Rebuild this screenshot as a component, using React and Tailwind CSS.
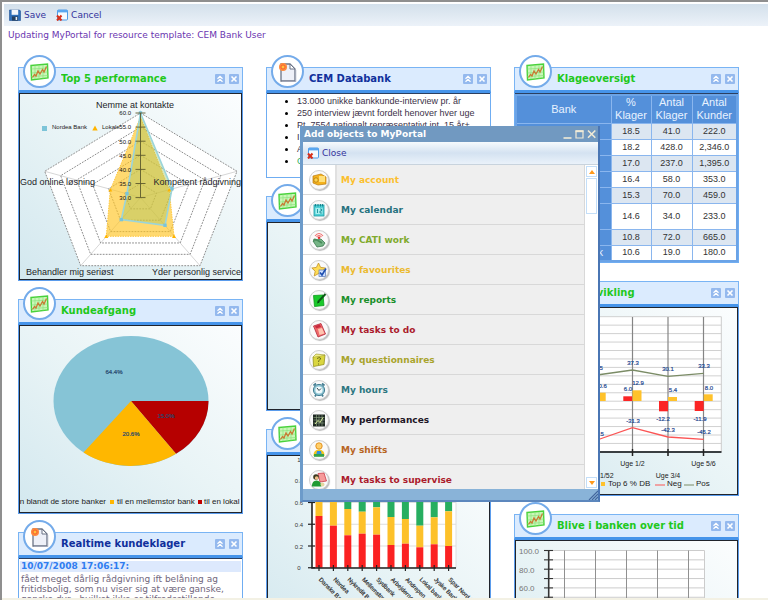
import React from "react";

const SANS = "font-['DejaVu_Sans',Verdana,sans-serif]";
const ARIAL = "font-['Liberation_Sans',Arial,sans-serif]";

function ChartGlyph() {
  return (
    <svg viewBox="0 0 19 18" className="h-[18px] w-[19px]">
      <path d="M1 2.5 L17.5 1 L18 15 L1.5 17 Z" fill="#c9f7b8" stroke="#49d23c" strokeWidth="1.4" />
      <path d="M5 2.5V16M9 2V16M13 2V15.5M1.5 6L17.5 5M1.5 10L17.5 9M1.5 13.5L17.5 12.5" stroke="#8be47c" strokeWidth="0.7" />
      <path d="M2.5 14.5 L4.5 11.5 L6 13 L8 8 L10 11 L12.5 6.5 L14 9 L16.5 3.5" fill="none" stroke="#c87b34" strokeWidth="1.3" />
    </svg>
  );
}

function PageGlyph() {
  return (
    <svg viewBox="0 0 19 20" className="h-[20px] w-[19px]">
      <path d="M3 2 H12 L17 7 V19 H3 Z" fill="#eef0f8" stroke="#6b7385" strokeWidth="1.3" />
      <path d="M12 2 V7 H17 Z" fill="#fff" stroke="#6b7385" strokeWidth="1" />
      <path d="M17.8 8 V19.7 H4" stroke="#a9aec0" fill="none" strokeWidth="0.8" />
      <circle cx="5" cy="5" r="4" fill="#ff8a3c" />
      <circle cx="5" cy="5" r="2" fill="#ffc23c" stroke="#f4502e" strokeWidth="0.8" />
    </svg>
  );
}

function WindowCloseGlyph() {
  return (
    <svg viewBox="0 0 12 12" className="h-[12px] w-[12px]">
      <rect x="1.5" y="1" width="10" height="10" rx="1" fill="#f4faff" stroke="#4d9be6" />
      <rect x="1.5" y="1" width="10" height="2.4" fill="#5aa7f0" />
      <path d="M1 6.5 L5.5 11.5 M5.5 6.5 L1 11.5" stroke="#d9301a" strokeWidth="2" />
    </svg>
  );
}

function SaveGlyph() {
  return (
    <svg viewBox="0 0 12 12" className="h-[12px] w-[12px]">
      <path d="M0.5 1 H10.5 L11.5 2 V11.5 H0.5 Z" fill="#2f6fb8" stroke="#1d4f94" strokeWidth="0.6" />
      <rect x="2.6" y="0.8" width="6.6" height="5" fill="#f3f7fb" />
      <rect x="3" y="7.4" width="6" height="4.2" fill="#24405f" />
      <rect x="6.6" y="8" width="1.6" height="3" fill="#e7eef6" />
    </svg>
  );
}

function Panel({ title, doc, plain, children }) {
  return (
    <article className="relative">
      <header className="flex h-[26px] items-center border-x border-t border-b-[3px] border-x-[#79b4f4] border-t-[#79b4f4] border-b-[#4694ea] bg-[#dbebfe] pr-[3px] pl-[42px]">
        <h2 className={`flex-1 truncate text-[10px] leading-[14px] font-bold ${doc ? "text-[#10309c]" : "text-[#1fc81c]"}`}>{title}</h2>
        <div className="flex gap-1">
          <button type="button" aria-label={`Collapse ${title}`} className="h-[10px] w-[10px] rounded-[1px] bg-[#94b9ee]">
            <svg viewBox="0 0 10 10" className="h-full w-full">
              <path d="M2.5 4.8 L5 2.4 L7.5 4.8 M2.5 7.8 L5 5.4 L7.5 7.8" fill="none" stroke="#fff" strokeWidth="1.3" />
            </svg>
          </button>
          <button type="button" aria-label={`Close ${title}`} className="h-[10px] w-[10px] rounded-[1px] bg-[#94b9ee]">
            <svg viewBox="0 0 10 10" className="h-full w-full">
              <path d="M2.5 2.5 L7.5 7.5 M7.5 2.5 L2.5 7.5" stroke="#fff" strokeWidth="1.6" />
            </svg>
          </button>
        </div>
      </header>
      <div className="absolute -top-3 left-[5px] flex h-[33px] w-[33px] items-center justify-center rounded-full border-2 border-[#74abea] bg-white">
        {doc ? <PageGlyph /> : <ChartGlyph />}
      </div>
      {plain ? (
        <div className="border-x border-b border-[#6fadf2] bg-white">
          <div className="border-t border-[#2b3f60]">{children}</div>
        </div>
      ) : (
        <div className="border-x border-b border-[#5b9cec]">
          <div className="overflow-hidden border border-[#20242c] bg-linear-to-tr from-[#d3e8ef] via-[#e9f4f6] to-[#fbfdfe]">{children}</div>
        </div>
      )}
    </article>
  );
}

const CX = 140.5;
const CY = 197.5;
const CORNERS = [[140.5, 113], [237, 171.3], [200, 265.7], [80.7, 265.7], [44.7, 171.3]];
const ring = (f) => CORNERS.map(([x, y]) => `${CX + (x - CX) * f},${CY + (y - CY) * f}`).join(" ");

function RadarChart() {
  const scale = ["60.0", "55.0", "50.0", "45.0", "40.0", "35.0", "30.0"];
  const bank = [[140.5, 113], [172, 188.7], [165, 225.3], [121.3, 219.6], [127, 193.7]];
  const local = [[140.5, 117], [169.3, 190], [174, 236.3], [106.3, 236.3], [110.3, 190]];
  return (
    <svg viewBox="20 94 221 185" className={`block w-full ${ARIAL}`}>
      <polygon points={ring(1)} fill="#fff" />
      {CORNERS.map(([x, y]) => <line key={x} x1={CX} y1={CY} x2={x} y2={y} stroke="#ccc" strokeWidth="0.8" />)}
      {[1, 5 / 6, 4 / 6, 3 / 6, 2 / 6, 1 / 6].map((f) => (
        <polygon key={f} points={ring(f)} fill="none" stroke="#8d8d8d" strokeWidth="1" strokeDasharray="1.8 1.2" />
      ))}
      <polygon points={local.join(" ")} fill="#ffc423" fillOpacity="0.65" stroke="#ffc940" strokeWidth="1" strokeDasharray="1.5 1" />
      <polygon points={bank.join(" ")} fill="#9fc25c" fillOpacity="0.4" stroke="#9bd5da" strokeWidth="1.6" />
      {bank.map(([x, y]) => <rect key={x} x={x - 1.7} y={y - 1.7} width="3.4" height="3.4" fill="#7cc4d8" />)}
      {local.slice(1).map(([x, y]) => <path key={x} d={`M${x} ${y - 2} l2 3.6 h-4 z`} fill="#ffb400" />)}
      <line x1={CX} y1="113" x2={CX} y2={CY} stroke="#5d5a2c" strokeWidth="0.9" />
      {scale.map((s, i) => (
        <g key={s}>
          <line x1="135.5" x2="145.5" y1={113 + i * 14.1} y2={113 + i * 14.1} stroke="#5d5a2c" strokeWidth="0.9" />
          <text x="131" y={115.3 + i * 14.1} fontSize="6" textAnchor="end" fill="#111">{s}</text>
        </g>
      ))}
      <rect x="42" y="126" width="5" height="5" fill="#7cc4d8" />
      <text x="52" y="129" fontSize="6" fill="#222">Nordea Bank</text>
      <path d="M95 125.5 l2.7 5 h-5.4 z" fill="#ffb400" />
      <text x="102" y="129" fontSize="6" fill="#222">Lokale</text>
      <g fontSize="9" fill="#1c2428">
        <text x="135" y="108" textAnchor="middle">Nemme at kontakte</text>
        <text x="20" y="185">God online løsning</text>
        <text x="241" y="185" textAnchor="end">Kompetent rådgivning</text>
        <text x="26" y="275">Behandler mig seriøst</text>
        <text x="241" y="275" textAnchor="end">Yder personlig service</text>
      </g>
    </svg>
  );
}

function PieChart() {
  return (
    <svg viewBox="20 326 221 186" className={`block w-full ${ARIAL}`}>
      <ellipse cx="131" cy="401" rx="77.5" ry="65" fill="#86c4d6" />
      <path d="M131 401 L208.5 401 A77.5 65 0 0 1 176 453.8 Z" fill="#b60000" />
      <path d="M131 401 L176 453.8 A77.5 65 0 0 1 83.5 452.5 Z" fill="#ffb700" />
      <g fontSize="6" fill="#27476e" stroke="#27476e" strokeWidth="0.2" textAnchor="middle">
        <text x="114" y="374">64.4%</text>
        <text x="131" y="436">20.6%</text>
        <text x="166" y="418">15.0%</text>
      </g>
      <g fontSize="8" fill="#222">
        <text x="106" y="504" textAnchor="end">n blandt de store banker</text>
        <rect x="110" y="500" width="4" height="4" fill="#ffb700" />
        <text x="117" y="504">til en mellemstor bank</text>
        <rect x="198" y="500" width="4" height="4" fill="#c00000" />
        <text x="204" y="504">til en lokal</text>
      </g>
    </svg>
  );
}

const STACKS = [
  ["Danske Bank", 516, 498], ["Nordea", 525.7, 500], ["Nykredit Bank", 535.3, 509], ["Mellemstor bank", 533.7, 511.7],
  ["Sydbank", 534.7, 507.3], ["Arbejdernes", 545, 517], ["Andrepen", 543.7, 519], ["Lokal bank", 547.3, 525.7],
  ["Jyske Bank", 544.3, 517.3], ["Spar Nord Bank", 546, 511.3],
];

function StackedChart() {
  return (
    <svg viewBox="268 456 221 186" className={`block w-full ${ARIAL}`}>
      <rect x="312" y="459" width="144" height="108.7" fill="#fff" />
      {["1", "0.8", "0.6", "0.4", "0.2", "0"].map((s, i) => {
        const y = 459 + i * 21.75;
        return (
          <g key={s}>
            <line x1="312" x2="456" y1={y} y2={y} stroke="#ddd" />
            <text x="299" y={y + 2.5} fontSize="6" textAnchor="middle" fill="#333">{s}</text>
          </g>
        );
      })}
      <line x1="456" x2="456" y1="459" y2="568" stroke="#ddd" />
      {STACKS.map(([name, red, yellow], i) => {
        const x = 315.5 + i * 14.4;
        return (
          <g key={name}>
            <rect x={x} y="459" width="7" height={yellow - 459} fill="#27ae60" />
            <rect x={x} y={yellow} width="7" height={red - yellow} fill="#fdc12a" />
            <rect x={x} y={red} width="7" height={567.7 - red} fill="#fb2222" />
            <line x1={x + 3.5} x2={x + 3.5} y1="565" y2="571" stroke="#222" strokeWidth="1.2" />
            <text transform={`translate(${x + 3} 580) rotate(45)`} fontSize="6" fill="#222" stroke="#222" strokeWidth="0.15">{name}</text>
          </g>
        );
      })}
      {[0, 1, 2, 3, 4, 5].map((i) => (
        <line key={i} x1="308" x2="315" y1={459 + i * 21.75} y2={459 + i * 21.75} stroke="#222" strokeWidth="1.2" />
      ))}
      <path d="M312 459 V568 H456" fill="none" stroke="#222" strokeWidth="1.6" />
    </svg>
  );
}

function TrendChart() {
  return (
    <svg viewBox="516 308 221 186" className={`block w-full ${ARIAL}`}>
      <rect x="552" y="316.7" width="169.3" height="135.3" fill="#fff" />
      {Array.from({ length: 16 }, (_, i) => (
        <line key={i} x1="552" x2="721.3" y1={316.7 + i * 8.45} y2={316.7 + i * 8.45} stroke="#ccc" strokeWidth="0.9" />
      ))}
      <line x1="721.3" x2="721.3" y1="316.7" y2="452" stroke="#ccc" />
      {[596.7, 632.5, 668, 703.5].map((x) => (
        <line key={x} x1={x} x2={x} y1="317" y2="456" stroke="#858585" strokeWidth="1.2" />
      ))}
      <g fill="#fb2525">
        <rect x="623.3" y="396.3" width="9" height="4.7" />
        <rect x="659" y="401" width="9" height="10.3" />
        <rect x="694.7" y="401" width="9" height="10" />
      </g>
      <g fill="#ffc22b">
        <rect x="596.7" y="392.7" width="9" height="8.3" />
        <rect x="632.5" y="390.3" width="9" height="10.7" />
        <rect x="668" y="397" width="9" height="4" />
        <rect x="703.7" y="394.3" width="9" height="6.7" />
      </g>
      <path d="M597 375 L632.5 370 L668 376.3 L703.7 373.3" fill="none" stroke="#7b8c66" strokeWidth="1.3" />
      <path d="M597 440 L632.5 427.6 L668 437 L703.7 439.3" fill="none" stroke="#fb5555" strokeWidth="1.3" />
      <line x1="552" x2="721.5" y1="452" y2="452" stroke="#3a3f42" strokeWidth="2" />
      {[632.5, 668, 703.5].map((x) => <line key={x} x1={x} x2={x} y1="449" y2="456" stroke="#222" strokeWidth="1.4" />)}
      <g fontSize="6" fill="#1f4a92" stroke="#1f4a92" strokeWidth="0.2" textAnchor="middle">
        <text x="633" y="365">37.3</text>
        <text x="668" y="371">30.1</text>
        <text x="704" y="368">33.3</text>
        <text x="597" y="370">32.5</text>
        <text x="601" y="388">10.6</text>
        <text x="628" y="391">6.0</text>
        <text x="638" y="385">12.9</text>
        <text x="673" y="392">5.4</text>
        <text x="709" y="390">8.0</text>
        <text x="663" y="421">-12.2</text>
        <text x="700" y="421">-11.9</text>
        <text x="633" y="423">-31.3</text>
        <text x="668" y="432">-42.3</text>
        <text x="704" y="434">-45.2</text>
        <text x="597" y="436">-45.5</text>
      </g>
      <g fontSize="7" fill="#222" textAnchor="middle">
        <text x="632.5" y="466">Uge 1/2</text>
        <text x="703.5" y="466">Uge 5/6</text>
        <text x="597.5" y="478">Uge 51/52</text>
        <text x="668" y="478">Uge 3/4</text>
      </g>
      <g fontSize="8" fill="#222">
        <rect x="601" y="482" width="4" height="4" fill="#ffc22b" />
        <text x="608" y="486">Top 6 % DB</text>
        <line x1="655" x2="665" y1="485" y2="485" stroke="#fb5555" />
        <text x="667" y="486">Neg</text>
        <line x1="684" x2="694" y1="485" y2="485" stroke="#7b8c66" />
        <text x="696" y="486">Pos</text>
      </g>
    </svg>
  );
}

function RetentionChart() {
  const rows = Array.from({ length: 11 }, (_, i) => 550.5 + i * 9.35);
  return (
    <svg viewBox="516 541 221 186" className={`block w-full ${ARIAL}`}>
      <rect x="549" y="550.5" width="155.5" height="93.5" fill="#fff" />
      {rows.map((y) => <line key={y} x1="549" x2="704.5" y1={y} y2={y} stroke="#ccc" />)}
      <line x1="704.5" x2="704.5" y1="550.5" y2="644" stroke="#ccc" />
      {[564.5, 595.5, 626.5, 657.5, 688.5].map((x) => <line key={x} x1={x} x2={x} y1="550.5" y2="644" stroke="#909090" />)}
      <line x1="548.7" x2="548.7" y1="550" y2="644" stroke="#333" strokeWidth="1.6" />
      {rows.map((y) => <line key={y} x1="544" x2="553" y1={y} y2={y} stroke="#333" strokeWidth="1.1" />)}
      <g fontSize="8" fill="#777">
        <text x="519" y="554">100.0</text>
        <text x="519" y="573">80.0</text>
        <text x="519" y="591">60.0</text>
        <text x="519" y="610">40.0</text>
      </g>
    </svg>
  );
}

const COMPLAINTS = [
  ["Danske Bank", "18.5", "41.0", "222.0"],
  ["Nordea", "18.2", "428.0", "2,346.0"],
  ["Nykredit", "17.0", "237.0", "1,395.0"],
  ["Sydbank", "16.4", "58.0", "353.0"],
  ["Jyske Bank", "15.3", "70.0", "459.0"],
  ["Arbejdernes", "14.6", "34.0", "233.0"],
  ["Lokal bank", "10.8", "72.0", "665.0"],
  ["Ringkjøbing Bank", "10.6", "19.0", "180.0"],
];

function ComplaintTable() {
  const th = "border border-[#8ab6ee] bg-[#5490da] p-0 text-[11px] leading-[13px] font-normal text-[#e8f2ff]";
  return (
    <table className={`w-full table-fixed border-collapse border-2 border-[#6ba3e6] text-center ${ARIAL}`}>
      <colgroup>
        <col />
        <col className="w-[40px]" />
        <col className="w-[41px]" />
        <col className="w-[45px]" />
      </colgroup>
      <thead>
        <tr className="h-[28px]">
          <th className={th}>Bank</th>
          <th className={th}>% Klager</th>
          <th className={th}>Antal Klager</th>
          <th className={th}>Antal Kunder</th>
        </tr>
      </thead>
      <tbody className="text-[9px] leading-[11px] text-[#333]">
        {COMPLAINTS.map(([name, ...values], i) => (
          <tr key={name} className={`${i === 5 ? "h-[26px]" : "h-[16px]"} ${i % 2 ? "bg-white" : "bg-[#dce6f1]"}`}>
            <th className="border border-[#8ab6ee] bg-[#5490da] p-0 text-[10px] font-normal text-[#e8f2ff]">{name}</th>
            {values.map((v) => <td key={v} className="border border-[#8ab6ee] p-0">{v}</td>)}
          </tr>
        ))}
      </tbody>
    </table>
  );
}

const OBJECTS = [
  ["My account", "text-[#fbbf2d]", (
    <g><path d="M3 5 L11 3 L16 6 V13 L8 14 L3 12 Z" fill="#f5b21c" stroke="#b97a10" strokeWidth="0.7" /><rect x="9" y="5" width="6" height="6" fill="#ffe07a" /><circle cx="6" cy="9" r="2.2" fill="#ffd34a" stroke="#a86f0c" strokeWidth="0.7" /></g>
  )],
  ["My calendar", "text-[#26727e]", (
    <g><rect x="4" y="4" width="10" height="11" fill="#4fd0d6" stroke="#1e9aa4" strokeWidth="0.8" /><path d="M5.5 3 V5.5 M8 3 V5.5 M10.5 3 V5.5 M12.5 3 V5.5" stroke="#0f7f8a" strokeWidth="0.9" /><rect x="5.5" y="7" width="7" height="6" fill="#a8f0f0" /><path d="M7.5 8 V12 M10 8 H11.5 V10 H10 V12 H12" stroke="#178f98" strokeWidth="0.9" fill="none" /></g>
  )],
  ["My CATI work", "text-[#80aa2c]", (
    <g><path d="M3 10 L11 8 L15 12 L13 15 L7 16 Z" fill="#76b486" stroke="#3c7a4f" strokeWidth="0.8" /><path d="M4 10.5 Q3 7 7 9 L12 12" fill="none" stroke="#4a8d5d" strokeWidth="1.6" /><path d="M5 5 Q9 0 13 5 M6.5 6 Q9 3 11.5 6" fill="none" stroke="#f06a6a" strokeWidth="1.1" /><circle cx="9" cy="6.7" r="1.3" fill="#e43131" /></g>
  )],
  ["My favourites", "text-[#ebba30]", (
    <g><path d="M8.5 2 L10.6 6.4 L15.4 7 L11.8 10.2 L12.8 15 L8.5 12.6 L4.2 15 L5.2 10.2 L1.8 7 L6.4 6.4 Z" fill="#ffdc55" stroke="#c29225" strokeWidth="0.8" /><rect x="9" y="9" width="6.5" height="6.5" fill="#cfe0ff" stroke="#5577b8" strokeWidth="0.7" /><path d="M10 11.5 L12 14 L16 7.5" fill="none" stroke="#1e4fb0" strokeWidth="1.6" /></g>
  )],
  ["My reports", "text-[#1a8f2a]", (
    <g><path d="M3.5 4.5 L13 4 L14 14.5 L4.5 15.5 Z" fill="#19c92a" stroke="#0d9a1c" strokeWidth="0.8" /><path d="M8 11 L15.5 3" stroke="#0b5a16" strokeWidth="2" /><path d="M7 12.5 L9.5 11.5 L8 10 Z" fill="#063d0c" /></g>
  )],
  ["My tasks to do", "text-[#ab1b2c]", (
    <g><path d="M3.5 5 L11 2.5 L15.5 13 L8 16 Z" fill="#ef6a6a" stroke="#b3273a" strokeWidth="0.8" /><path d="M8 8 L12 7 L14.5 12.5 L9.5 14 Z" fill="#ffc4b0" /><path d="M5 5 L10 3.5 L11 6 L6 7.4 Z" fill="#c92b3f" /></g>
  )],
  ["My questionnaires", "text-[#a9a42c]", (
    <g><path d="M3 6 L15 4 L14 13.5 L3.5 15.5 Z" fill="#d9d640" stroke="#97931f" strokeWidth="0.8" /><path d="M3 6 L6 3 L15 4" fill="#f0ee8a" stroke="#97931f" strokeWidth="0.6" /><path d="M7 7.5 Q11 5.5 10.5 8 Q8.5 9.5 8.5 11 M8 13 H9" stroke="#6a691c" strokeWidth="1" fill="none" /></g>
  )],
  ["My hours", "text-[#2b7680]", (
    <g><path d="M3.5 4.5 L6 2.5 M14.5 4.5 L12 2.5 M5 15.5 L6 13.5 M13 15.5 L12 13.5" stroke="#447e92" strokeWidth="1.7" /><circle cx="9" cy="9" r="5.6" fill="#8fc6d4" stroke="#447e92" strokeWidth="1" /><circle cx="9" cy="9" r="3.6" fill="#f1fafc" /><path d="M7 7 L9 9.5 L11 7.5" stroke="#33484f" strokeWidth="1" fill="none" /></g>
  )],
  ["My performances", "text-[#1d1626]", (
    <g><rect x="3" y="3.5" width="12" height="12" fill="#202a24" /><path d="M3.5 6.5 H14.5 M3.5 9 H14.5 M3.5 12 H14.5 M6.5 4 V15 M9 4 V15 M12 4 V15" stroke="#92aa88" strokeWidth="0.6" /><path d="M5 13 L8 9.5 L10 11.5 L13 6.5" stroke="#d8ee9a" fill="none" /></g>
  )],
  ["My shifts", "text-[#b8651f]", (
    <g><circle cx="9" cy="5" r="3.2" fill="#ffcf6b" stroke="#e08b16" strokeWidth="0.9" /><path d="M3.4 15 Q3.4 8.5 9 8.5 Q14.6 8.5 14.6 15 Z" fill="#f2c61c" /><path d="M6 15 L7 10 H11 L12 15 Z" fill="#2f8fe0" /><rect x="4" y="13" width="10" height="2.8" fill="#39a24a" /></g>
  )],
  ["My tasks to supervise", "text-[#ab1b2c]", (
    <g><path d="M8 2.5 L14 2 L16.5 10 L10 11 Z" fill="#f79a9a" stroke="#c83c4a" strokeWidth="0.8" /><circle cx="6" cy="6" r="2.8" fill="#3c3a20" /><circle cx="6.6" cy="7" r="1.8" fill="#f0be86" /><path d="M1.8 15.5 Q2 9.5 6.5 9.5 Q11 9.5 11.5 15.5 Z" fill="#1f9a34" /><circle cx="12.5" cy="13.5" r="2" fill="#e5d7a0" /></g>
  )],
];

function AddObjectsDialog() {
  const scroll = "flex w-full shrink-0 items-center justify-center border border-[#c3def8] bg-white";
  return (
    <section role="dialog" aria-label="Add objects to MyPortal" className="absolute top-[124px] left-[298px] flex h-[376px] w-[300px] flex-col border-r-2 border-b-2 border-l-[3px] border-r-[#4a76b4] border-b-[#5c87bd] border-l-[#6c9bca] bg-[#8ab4d8]">
      <header className="flex h-[16px] shrink-0 items-center bg-[#7199c1] pr-[2px] pl-[1px]">
        <h2 className="flex-1 text-[9px] leading-[12px] font-bold text-white">Add objects to MyPortal</h2>
        <div className="flex gap-[3px] text-[#f0ead6]">
          <button type="button" aria-label="Minimize" className="h-[10px] w-[9px]">
            <svg viewBox="0 0 9 10" className="h-full w-full"><path d="M0.5 9 H8.5" stroke="currentColor" strokeWidth="1.6" /></svg>
          </button>
          <button type="button" aria-label="Maximize" className="h-[10px] w-[9px]">
            <svg viewBox="0 0 9 10" className="h-full w-full"><path d="M1 2 H8 V9 H1 Z" fill="none" stroke="currentColor" strokeWidth="1.2" /><path d="M0.5 2.2 H8.5" stroke="currentColor" strokeWidth="2" /></svg>
          </button>
          <button type="button" aria-label="Close window" className="h-[10px] w-[9px]">
            <svg viewBox="0 0 9 10" className="h-full w-full"><path d="M1 1.5 L8.3 8.8 M8.3 1.5 L1 8.8" stroke="currentColor" strokeWidth="1.6" /></svg>
          </button>
        </div>
      </header>
      <div className="flex h-[22px] shrink-0 items-center bg-linear-to-b from-[#f6fafd] via-[#d4e2f1] to-[#eaf2fa] pl-1">
        <button type="button" className="flex items-center gap-[3px] text-[9px] leading-[12px] text-[#33339c]">
          <WindowCloseGlyph />
          Close
        </button>
      </div>
      <div className="flex min-h-0 flex-1 border-t border-[#c8d3dd] bg-white">
        <ul className="flex-1 overflow-hidden">
          {OBJECTS.map(([label, color, glyph]) => (
            <li key={label} className="flex h-[30px]">
              <span className="flex w-[34px] items-center justify-center border-r-2 border-b border-r-[#e0e0e0] border-b-[#d8d8d8] bg-white">
                <span className="flex h-[20px] w-[20px] items-center justify-center rounded-full border border-[#cfcfcf] bg-[#fafafa] shadow-[1px_1px_1px_#bbb]">
                  <svg viewBox="1 1 16 16" className="h-[16px] w-[16px]">{glyph}</svg>
                </span>
              </span>
              <a href="#add" className={`flex flex-1 items-center border-r border-b border-[#d8d8d8] bg-[#efefef] pl-1 text-[9px] leading-[12px] font-bold ${color}`}>{label}</a>
            </li>
          ))}
        </ul>
        <div className="flex w-[13px] flex-col gap-px p-px">
          <button type="button" aria-label="Scroll up" className={`${scroll} h-[11px]`}>
            <svg viewBox="0 0 6 4" className="h-1 w-[6px]"><path d="M0 4 L3 0 L6 4 Z" fill="#ff9a1c" /></svg>
          </button>
          <div className="h-[36px] border border-[#c3def8] bg-white" />
          <div className="flex-1" />
          <button type="button" aria-label="Scroll down" className={`${scroll} h-[11px]`}>
            <svg viewBox="0 0 6 4" className="h-1 w-[6px]"><path d="M0 0 L3 4 L6 0 Z" fill="#ff9a1c" /></svg>
          </button>
        </div>
      </div>
      <footer className="flex h-[11px] shrink-0 items-end justify-end bg-[#89b3d8]">
        <svg viewBox="0 0 10 10" className="h-[10px] w-[10px]">
          <path d="M1 10 L10 1 M4 10 L10 4 M7 10 L10 7" stroke="#41659c" strokeWidth="1.1" />
        </svg>
      </footer>
    </section>
  );
}

export default function App() {
  return (
    <div className={`relative flex h-screen flex-col overflow-hidden border-t-2 border-l-2 border-[#8f8f8f] bg-white ${SANS}`}>
      <nav className="mt-[2px] ml-[2px] flex h-[22px] shrink-0 items-center gap-[10px] bg-linear-to-b from-[#d3e0eb] to-[#ecf2f9] pl-[5px] text-[9px] leading-[12px] text-[#33339c]">
        <button type="button" className="flex items-center gap-[3px]">
          <SaveGlyph />
          Save
        </button>
        <button type="button" className="flex items-center gap-[3px]">
          <WindowCloseGlyph />
          Cancel
        </button>
      </nav>
      <p className="h-[18px] shrink-0 pl-[6px] text-[9px] leading-[18px] text-[#6a35b0]">Updating MyPortal for resource template: CEM Bank User</p>
      <main className="min-h-0 flex-1 overflow-hidden pt-[23px] pr-[29px] pl-4">
        <div className="grid grid-cols-3 items-start gap-[23px]">
          <div className="flex flex-col gap-[18px]">
            <Panel title="Top 5 performance"><RadarChart /></Panel>
            <Panel title="Kundeafgang"><PieChart /></Panel>
            <Panel title="Realtime kundeklager" doc plain>
              <div className="px-px pt-[2px] text-[9px]">
                <h3 className="bg-[#dde9fd] pl-[1px] leading-[11px] font-bold text-[#2f7df0]">10/07/2008 17:06:17:</h3>
                <p className="pt-[2px] pl-[1px] leading-[10px] text-[#71667c]">
                  fået meget dårlig rådgivning ift belåning ag fritidsbolig, som nu viser sig at være ganske, ganske dyr - hvilket ikke er tilfredsstillende
                </p>
              </div>
            </Panel>
          </div>
          <div className="flex flex-col gap-[18px]">
            <Panel title="CEM Databank" doc plain>
              <ul className={`h-[83px] list-disc overflow-hidden pt-px pl-[30px] text-[9px] leading-[12px] whitespace-nowrap text-[#3c3148] marker:text-black ${ARIAL}`}>
                <li>13.000 unikke bankkunde-interview pr. år</li>
                <li>250 interview jævnt fordelt henover hver uge</li>
                <li>Pt. 7554 nationalt repræsentativt int. 15 år+</li>
                <li>I</li>
                <li>A</li>
                <li className="marker:text-[#1010a0]"><a href="#databank" className="text-[#2fae5a]">C</a></li>
              </ul>
            </Panel>
            <Panel title="Tilfredshed"><svg viewBox="0 0 221 186" className="block w-full" /></Panel>
            <Panel title="Fordeling"><StackedChart /></Panel>
          </div>
          <div className="flex flex-col gap-[18px]">
            <Panel title="Klageoversigt" plain><ComplaintTable /></Panel>
            <Panel title="Kursudvikling"><TrendChart /></Panel>
            <Panel title="Blive i banken over tid"><RetentionChart /></Panel>
          </div>
        </div>
      </main>
      <div className="h-[2px] shrink-0 bg-[#f3f1e4]" />
      <AddObjectsDialog />
    </div>
  );
}
